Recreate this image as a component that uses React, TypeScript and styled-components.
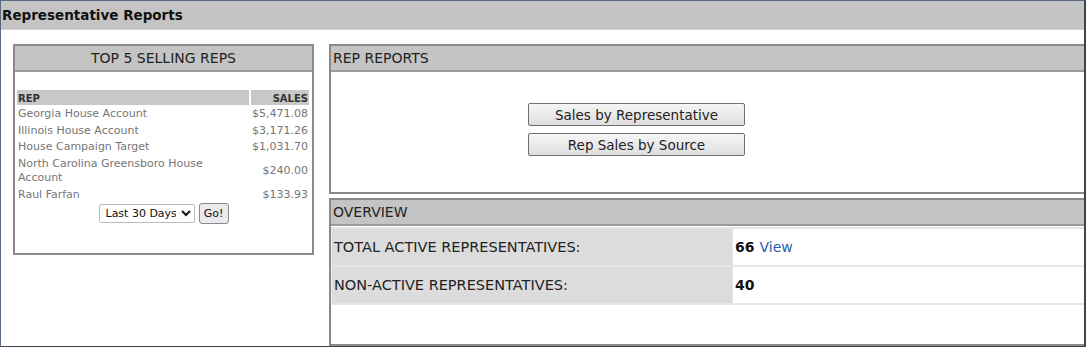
import React from "react";
import styled, { createGlobalStyle } from "styled-components";

const Global = createGlobalStyle`
  html, body { margin: 0; padding: 0; background: #fff; }
  body { font-family: "DejaVu Sans", Verdana, sans-serif; }
`;

const Frame = styled.div`
  width: 1086px;
  height: 347px;
  box-sizing: border-box;
  border-top: 1px solid #5a6a80;
  border-left: 1px solid #5a6a80;
  border-bottom: 1px solid #3c4450;
  border-right: 2px solid #3c4450;
  overflow: hidden;
  background: #fff;
`;

const TitleBar = styled.div`
  height: 28px;
  background: #c4c4c4;
  border-bottom: 1px solid #d4d4d4;
  display: flex;
  align-items: center;
  padding-left: 1px;
  font-weight: bold;
  font-size: 13.5px;
  color: #111;
`;

const Content = styled.div`
  display: flex;
  align-items: flex-start;
  gap: 15px;
  padding: 14px 0 0 12px;
`;

const Panel = styled.div<{ $w?: number; $h: number }>`
  box-sizing: border-box;
  width: ${(p) => (p.$w ? `${p.$w}px` : "780px")};
  height: ${(p) => p.$h}px;
  border: 2px solid #8a8a8a;
  background: #fff;
  display: flex;
  flex-direction: column;
  flex-shrink: 0;
`;

const PanelHeader = styled.div<{ $center?: boolean }>`
  height: 24px;
  background: #c4c4c4;
  border-bottom: 2px solid #9a9a9a;
  display: flex;
  align-items: center;
  justify-content: ${(p) => (p.$center ? "center" : "flex-start")};
  padding-left: ${(p) => (p.$center ? 0 : 2)}px;
  font-size: 14px;
  color: #222;
`;

const RightCol = styled.div`
  display: flex;
  flex-direction: column;
  gap: 4px;
`;

const SalesTable = styled.table`
  margin: 16px 0 0 0;
  width: 296px;
  border-spacing: 2px;
  font-size: 11px;
  color: #767676;
`;

const HeadCell = styled.th<{ $right?: boolean }>`
  background: #c8c8c8;
  color: #333;
  font-weight: bold;
  font-size: 10px;
  text-align: ${(p) => (p.$right ? "right" : "left")};
  padding: 1px 1px 0 1px;
  height: 14px;
`;

const Cell = styled.td<{ $right?: boolean }>`
  text-align: ${(p) => (p.$right ? "right" : "left")};
  padding: 0 1px;
  line-height: 14.5px;
  vertical-align: middle;
`;

const FilterRow = styled.div`
  display: flex;
  justify-content: center;
  align-items: center;
  gap: 4px;
  margin-top: -1px;
`;

const Select = styled.select`
  font-family: "DejaVu Sans", Verdana, sans-serif;
  font-size: 11px;
  height: 19px;
  width: 96px;
  border: 1px solid #bbb;
  border-radius: 2px;
  background: #fff;
  color: #111;
  padding: 0 2px;
`;

const SmallButton = styled.button`
  font-family: "DejaVu Sans", Verdana, sans-serif;
  font-size: 11px;
  height: 21px;
  width: 30px;
  padding: 0;
  border: 1px solid #8a8a8a;
  border-radius: 3px;
  background: #e9e9ee;
  color: #111;
`;

const ReportButtons = styled.div`
  display: flex;
  flex-direction: column;
  gap: 7px;
  padding: 31px 0 0 197px;
`;

const ReportButton = styled.button`
  width: 217px;
  height: 23px;
  padding: 0;
  font-family: "DejaVu Sans", Verdana, sans-serif;
  font-size: 13.5px;
  color: #222;
  border: 1px solid #6e6e6e;
  border-radius: 2px;
  background: linear-gradient(#f6f6f6, #dedede);
`;

const OverviewTable = styled.table`
  margin-top: 1px;
  width: 100%;
  border-collapse: collapse;
  font-size: 14.5px;
  color: #222;
  border-top: 2px solid #e6e6e6;
`;

const LabelCell = styled.td`
  width: 398px;
  height: 36px;
  background: #dcdcdc;
  padding: 0 0 0 2px;
  border-bottom: 2px solid #e6e6e6;
  border-right: 1px solid #e6e6e6;
  border-left: 1px solid #f0f0f0;
`;

const ValueCell = styled.td`
  height: 36px;
  padding: 0 0 0 2px;
  border-bottom: 2px solid #e6e6e6;
  font-size: 14px;
`;

const Count = styled.b`
  color: #111;
`;

const ViewLink = styled.a`
  color: #2a5bab;
  text-decoration: none;
  margin-left: 5px;
`;

const reps: [string, string][] = [
  ["Georgia House Account", "$5,471.08"],
  ["Illinois House Account", "$3,171.26"],
  ["House Campaign Target", "$1,031.70"],
  ["North Carolina Greensboro House Account", "$240.00"],
  ["Raul Farfan", "$133.93"],
];

export default function App() {
  return (
    <>
      <Global />
      <Frame>
        <TitleBar>Representative Reports</TitleBar>
        <Content>
          <Panel $w={301} $h={211}>
            <PanelHeader $center>TOP 5 SELLING REPS</PanelHeader>
            <SalesTable>
              <thead>
                <tr>
                  <HeadCell style={{ width: 230 }}>REP</HeadCell>
                  <HeadCell $right>SALES</HeadCell>
                </tr>
              </thead>
              <tbody>
                {reps.map(([n, s]) => (
                  <tr key={n}>
                    <Cell>{n}</Cell>
                    <Cell $right>{s}</Cell>
                  </tr>
                ))}
              </tbody>
            </SalesTable>
            <FilterRow>
              <Select defaultValue="30">
                <option value="30">Last 30 Days</option>
              </Select>
              <SmallButton>Go!</SmallButton>
            </FilterRow>
          </Panel>
          <RightCol>
            <Panel $h={150}>
              <PanelHeader>REP REPORTS</PanelHeader>
              <ReportButtons>
                <ReportButton>Sales by Representative</ReportButton>
                <ReportButton>Rep Sales by Source</ReportButton>
              </ReportButtons>
            </Panel>
            <Panel $h={148}>
              <PanelHeader>OVERVIEW</PanelHeader>
              <OverviewTable>
                <tbody>
                  <tr>
                    <LabelCell>TOTAL ACTIVE REPRESENTATIVES:</LabelCell>
                    <ValueCell>
                      <Count>66</Count>
                      <ViewLink href="#">View</ViewLink>
                    </ValueCell>
                  </tr>
                  <tr>
                    <LabelCell>NON-ACTIVE REPRESENTATIVES:</LabelCell>
                    <ValueCell>
                      <Count>40</Count>
                    </ValueCell>
                  </tr>
                </tbody>
              </OverviewTable>
            </Panel>
          </RightCol>
        </Content>
      </Frame>
    </>
  );
}
